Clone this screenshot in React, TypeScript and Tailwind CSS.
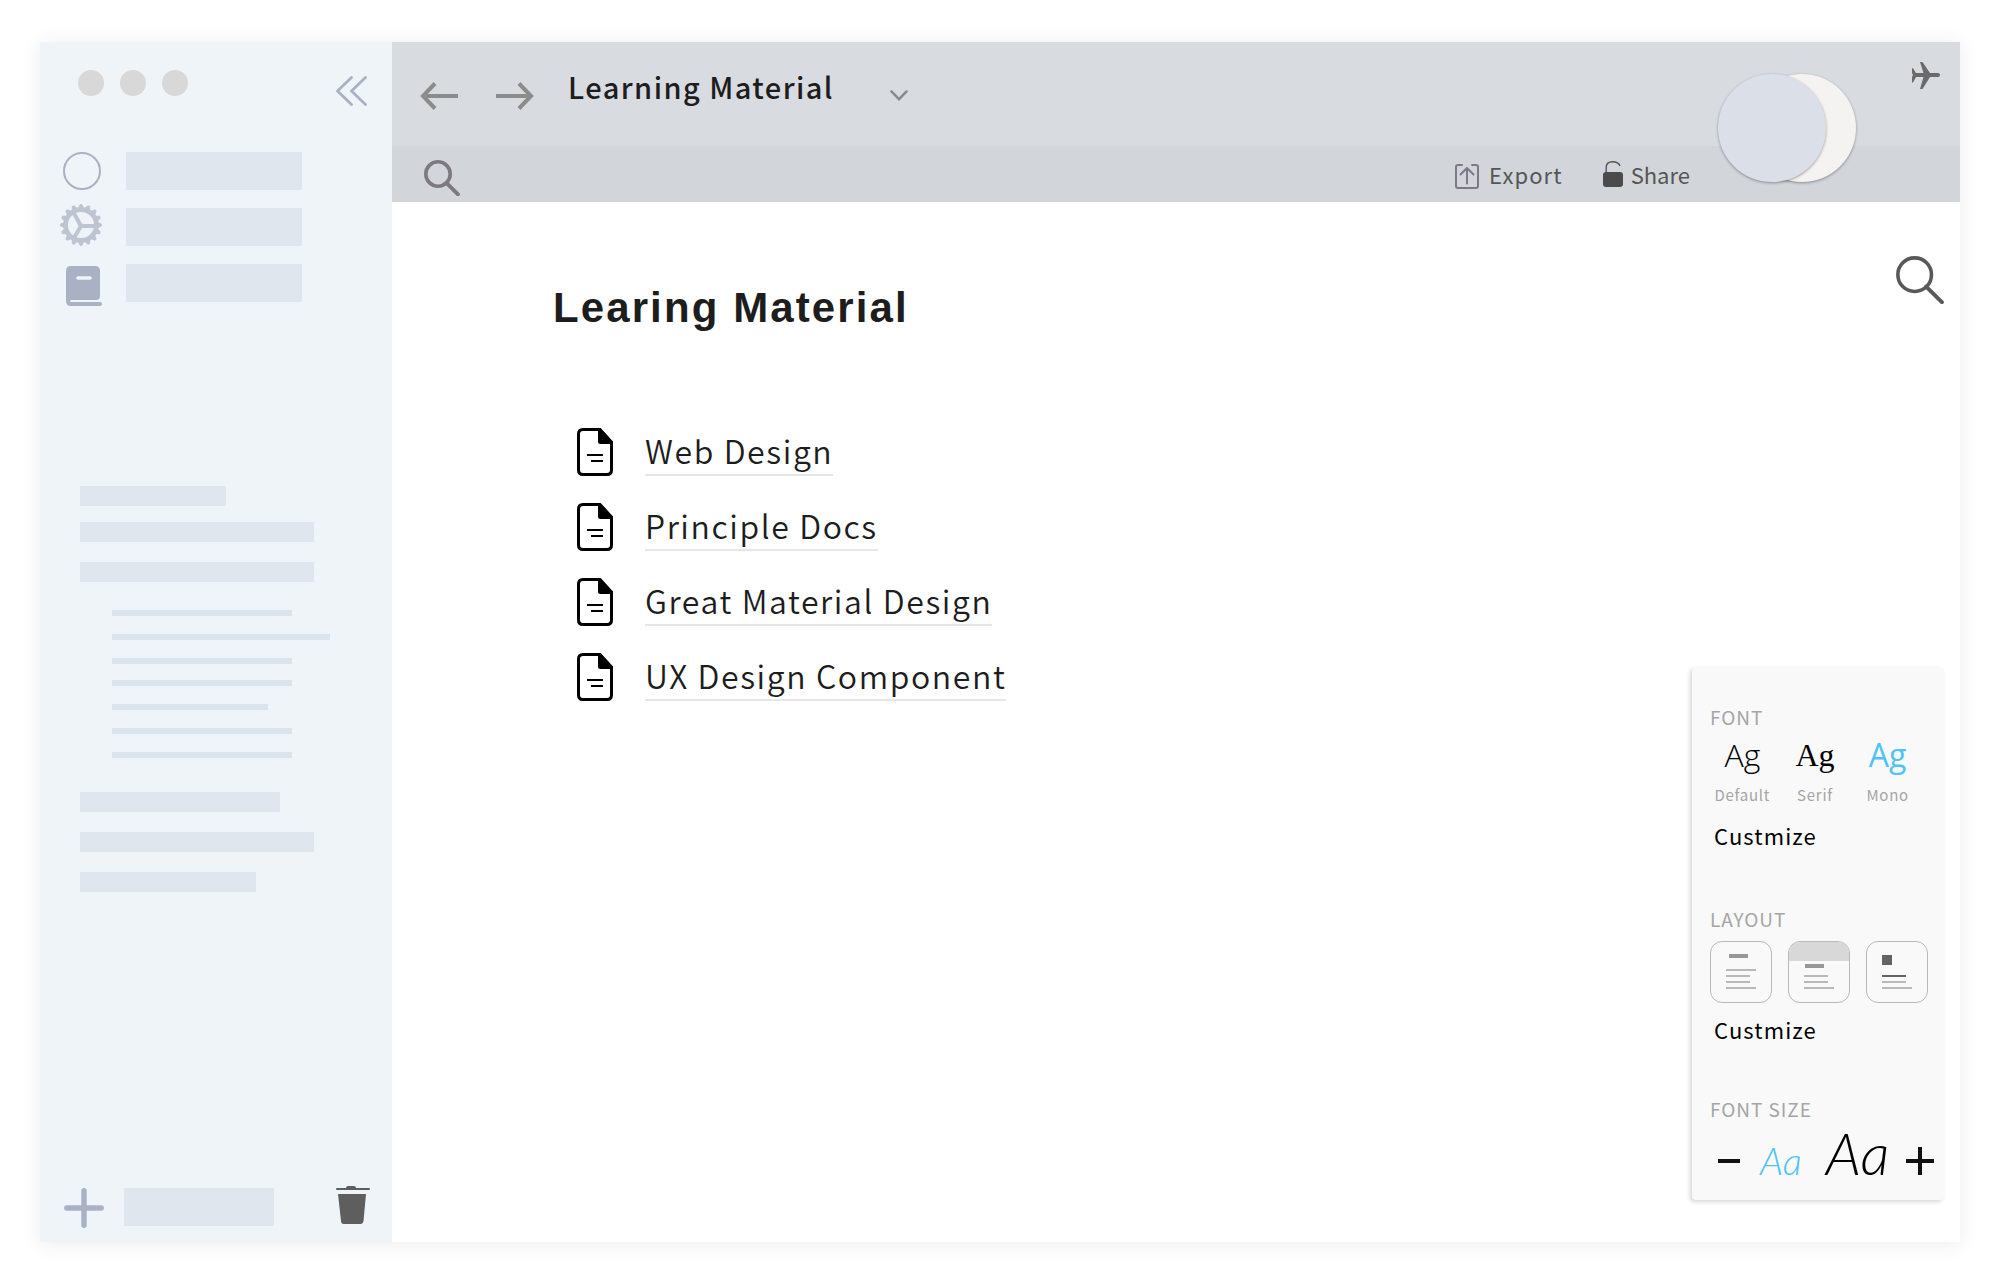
import type { ReactNode } from "react";

function Gear() {
  const teeth = Array.from({ length: 16 }, (_, i) => i * 22.5);
  return (
    <svg width="42" height="42" viewBox="-21 -21 42 42" fill="none" stroke="#bfc4d1" aria-hidden="true">
      <circle r="15.4" strokeWidth="4.6" />
      {teeth.map((a) => (
        <path key={a} d="M17 -2.4 L20.4 -0.9 V0.9 L17 2.4 Z" fill="#bfc4d1" strokeWidth="1" transform={`rotate(${a})`} />
      ))}
      <path d="M0 1 H15 M0 1 L-7.5 -12.5 M0 1 L-7 13" strokeWidth="4" />
      <circle cy="0.5" r="2" fill="#bfc4d1" />
    </svg>
  );
}

function Book() {
  return (
    <svg width="36" height="40" viewBox="0 0 36 40" aria-hidden="true">
      <path d="M5 0 H29 Q34 0 34 5 V30 Q34 34 30 34 H5.5 Q4 34 4 35 Q4 36 5.5 36 H34 Q36 36 36 38 Q36 40 34 40 H5 Q0 40 0 35 V5 Q0 0 5 0 Z" fill="#aab1c4" />
      <path d="M12 12 H24" stroke="#eef4f7" strokeWidth="3.6" strokeLinecap="round" />
    </svg>
  );
}

function Magnifier({ className, thin }: { className: string; thin?: boolean }) {
  return (
    <svg className={className} viewBox="0 0 36 36" fill="none" stroke="currentColor" aria-hidden="true">
      <circle cx="14" cy="14" r={thin ? 12.6 : 12.2} strokeWidth={thin ? 2.7 : 3.6} />
      <path d={thin ? "M22.6 23 L34.4 34.6" : "M22.4 22.8 L34 34.4"} strokeWidth={thin ? 3 : 3.8} strokeLinecap="round" />
    </svg>
  );
}

function DocIcon() {
  return (
    <svg width="36" height="48" viewBox="0 0 36 48" fill="none" aria-hidden="true">
      <path d="M6 1.5 H23 L34.5 14 V42 Q34.5 46.5 30 46.5 H6 Q1.5 46.5 1.5 42 V6 Q1.5 1.5 6 1.5 Z" stroke="#000" strokeWidth="3" />
      <path d="M21 1 H24 L36 14 V16 H23.5 Q21 16 21 13.5 Z" fill="#000" />
      <path d="M10 27 H26 M14 33 H26" stroke="#000" strokeWidth="2" />
    </svg>
  );
}

const bookmarks: { label: string; icon: ReactNode }[] = [
  {
    label: "Profile",
    icon: <span className="block size-[38px] rounded-full border-2 border-[#aab1c4]" />,
  },
  {
    label: "Settings",
    icon: (
      <span className="pr-0.5 pb-1">
        <Gear />
      </span>
    ),
  },
  {
    label: "Library",
    icon: (
      <span className="pt-1.5 pl-1">
        <Book />
      </span>
    ),
  },
];

function Block({ className }: { className: string }) {
  return <div className={`bg-[#e0e6ee] ${className}`} />;
}

function Sidebar() {
  return (
    <aside className="flex w-[352px] shrink-0 flex-col bg-[#eef4f7]">
      <div className="flex items-start justify-between pt-7 pr-6 pl-[38px]">
        <div className="flex gap-4">
          <span className="size-[26px] rounded-full bg-[#d8d8d8]" />
          <span className="size-[26px] rounded-full bg-[#d8d8d8]" />
          <span className="size-[26px] rounded-full bg-[#d8d8d8]" />
        </div>
        <button type="button" aria-label="Collapse sidebar" className="mt-1.5">
          <svg width="32" height="30" viewBox="0 0 32 30" fill="none" stroke="#aab1c4" strokeWidth="2.8" strokeLinecap="round" strokeLinejoin="round" aria-hidden="true">
            <path d="M15.5 1.5 L1.5 15 L15.5 28.5 M29.5 1.5 L15.5 15 L29.5 28.5" />
          </svg>
        </button>
      </div>

      <nav className="mt-[46px] flex flex-col gap-[18px]">
        {bookmarks.map((b) => (
          <button key={b.label} type="button" aria-label={b.label} className="flex h-[38px] items-center pl-5">
            <span className="flex w-[44px] justify-center">{b.icon}</span>
            <Block className="ml-[22px] h-[38px] w-[176px]" />
          </button>
        ))}
      </nav>

      <div className="mt-[184px] flex flex-col pl-10">
        <Block className="h-5 w-[146px]" />
        <Block className="mt-4 h-5 w-[234px]" />
        <Block className="mt-5 h-5 w-[234px]" />
        <div className="mt-7 flex flex-col gap-[18px] pl-8">
          <div className="h-1.5 w-[180px] bg-[#dbe4eb]" />
          <div className="h-1.5 w-[218px] bg-[#dbe4eb]" />
          <div className="h-1.5 w-[180px] bg-[#dbe4eb]" />
        </div>
        <div className="mt-4 flex flex-col gap-[18px] pl-8">
          <div className="h-1.5 w-[180px] bg-[#dbe4eb]" />
          <div className="h-1.5 w-[156px] bg-[#dbe4eb]" />
          <div className="h-1.5 w-[180px] bg-[#dbe4eb]" />
          <div className="h-1.5 w-[180px] bg-[#dbe4eb]" />
        </div>
        <Block className="mt-[34px] h-5 w-[200px]" />
        <Block className="mt-5 h-5 w-[234px]" />
        <Block className="mt-5 h-5 w-[176px]" />
      </div>

      <div className="mt-auto flex items-end pr-[22px] pb-3.5 pl-6">
        <button type="button" aria-label="New page" className="flex items-start gap-5">
          <svg width="40" height="40" viewBox="0 0 40 40" stroke="#aab1c4" strokeWidth="5.4" strokeLinecap="round" aria-hidden="true">
            <path d="M20 2.8 V37.2 M2.8 20 H37.2" />
          </svg>
          <Block className="h-[38px] w-[150px]" />
        </button>
        <button type="button" aria-label="Trash" className="ml-auto pb-1">
          <svg width="34" height="38" viewBox="0 0 34 38" fill="#5e5e5e" aria-hidden="true">
            <path d="M1 2 H10 Q10 0 12 0 H18 Q20 0 20 2 H33 Q34 2 34 3 Q34 4 33 4 H1 Q0 4 0 3 Q0 2 1 2 Z" />
            <path d="M2 8 H30 L27.5 35 Q27 38 24.5 38 H8 Q5 38 5 35 Z" />
          </svg>
        </button>
      </div>
    </aside>
  );
}

function Header() {
  return (
    <header className="relative">
      <div className="flex h-[104px] items-start bg-[#d8dbe0] pt-5 pr-5 pl-7">
        <button type="button" aria-label="Back" className="mt-5">
          <svg width="38" height="28" viewBox="0 0 38 28" fill="none" stroke="#8c8c8c" strokeWidth="4" aria-hidden="true">
            <path d="M38 14 H3 M15 1.5 L3 14 L15 26.5" />
          </svg>
        </button>
        <button type="button" aria-label="Forward" className="mt-5 ml-[38px]">
          <svg width="38" height="28" viewBox="0 0 38 28" fill="none" stroke="#8c8c8c" strokeWidth="4" aria-hidden="true">
            <path d="M0 14 H35 M23 1.5 L35 14 L23 26.5" />
          </svg>
        </button>
        <button type="button" className="mt-1 ml-[34px] flex items-start gap-14 text-left text-[29px] leading-10 font-medium tracking-wider text-[#1d1d1d]">
          <span>Learning Material</span>
          <svg className="mt-6" width="18" height="11" viewBox="0 0 18 11" fill="none" stroke="#8a8794" strokeWidth="2.4" strokeLinecap="round" aria-hidden="true">
            <path d="M1.4 1.4 L9 9.2 L16.6 1.4" />
          </svg>
        </button>
        <button type="button" aria-label="Send" className="ml-auto">
          <svg width="28" height="27" viewBox="0 0 28 27" fill="#6a6a6a" aria-hidden="true">
            <path d="M0 6.3 H1 L4 11 H11.5 L8 0 H10.5 L18 11 H26 Q28 11 28 13 Q28 15 26 15 H18 L10.5 27 H8 L11.5 15 H4 L1 20.5 H0 V15 L1 13 L0 11 Z" />
          </svg>
        </button>
      </div>
      <div className="flex h-14 items-center bg-[#d2d5da] pr-[270px] pl-8 text-[22px] leading-8 text-[#555]">
        <button type="button" aria-label="Search" className="mt-2 text-[#7d7982]">
          <Magnifier className="size-9" />
        </button>
        <button type="button" className="ml-auto flex items-center gap-2.5 tracking-wider">
          <svg className="mt-1" width="24" height="25" viewBox="0 0 24 25" fill="none" stroke="#7f7889" strokeWidth="2" strokeLinecap="round" strokeLinejoin="round" aria-hidden="true">
            <path d="M7 1 H3 Q1 1 1 3 V22 Q1 24 3 24 H21 Q23 24 23 22 V3 Q23 1 21 1 H17 M12 19.5 V4.5 M5.5 10.5 L12 4 L18.5 10.5" />
          </svg>
          Export
        </button>
        <button type="button" className="ml-10 flex items-center gap-2">
          <svg width="20" height="26" viewBox="0 0 20 26" aria-hidden="true">
            <path d="M3.2 12 V6.5 Q3.4 0.8 9.5 0.8 Q15.5 0.8 17 5" fill="none" stroke="#555" strokeWidth="1.4" />
            <rect y="11" width="20" height="15" rx="3" fill="#4b4b4b" />
          </svg>
          Share
        </button>
      </div>
      <div className="absolute top-8 right-[104px] flex">
        <span className="z-10 size-[108px] rounded-full bg-[#dbdfe8] shadow-[0_1px_3px_rgba(0,0,0,0.35)]" />
        <span className="-ml-[78px] size-[108px] rounded-full bg-[#f4f3f1] shadow-[0_1px_3px_rgba(0,0,0,0.35)]" />
      </div>
    </header>
  );
}

const pages = ["Web Design", "Principle Docs", "Great Material Design", "UX Design Component"];

function Document() {
  return (
    <article className="flex-1 pt-[82px] pl-[161px]">
      <h1 className="font-['Liberation_Sans',Arial,sans-serif] text-[42px] leading-[48px] font-bold tracking-wider text-[#1d1d1d]">
        Learing Material
      </h1>
      <ul className="mt-24 flex flex-col gap-[27px] pl-6">
        {pages.map((p) => (
          <li key={p} className="flex items-start gap-8">
            <DocIcon />
            <a href="#" className="border-b-2 border-[#e6e6e6] pb-0.5 text-[32px] leading-[44px] font-[350] tracking-wider text-[#1d1d1d]">
              {p}
            </a>
          </li>
        ))}
      </ul>
    </article>
  );
}

function GroupTitle({ children }: { children: ReactNode }) {
  return <h2 className="pl-1 text-[19px] leading-6 tracking-wider text-[#a5a5a5]">{children}</h2>;
}

function Customize({ className }: { className: string }) {
  return (
    <button type="button" className={`ml-2 block text-[22px] leading-8 tracking-wider text-black ${className}`}>
      Custmize
    </button>
  );
}

function LayoutOption({ label, children }: { label: string; children: ReactNode }) {
  return (
    <button type="button" aria-label={label} className="size-[62px] overflow-hidden rounded-xl border border-[#b9b9b9]">
      <svg width="60" height="60" viewBox="1 1 60 60" aria-hidden="true">
        {children}
      </svg>
    </button>
  );
}

function StylePanel() {
  return (
    <section aria-label="Page style" className="w-[252px] rounded bg-[#f9f9f9] pt-[38px] pr-4 pb-[19px] pl-3.5 shadow-[-2px_2px_4px_rgba(0,0,0,0.16)]">
      <GroupTitle>FONT</GroupTitle>
      <div className="mt-2 grid grid-cols-3 pr-1 text-center">
        <button type="button" className="text-[15px] leading-5 tracking-wider text-[#a5a5a5]">
          <span className="block font-['Open_Sans','Noto_Sans',sans-serif] text-[32px] leading-9 font-light tracking-normal text-black">Ag</span>
          <span className="mt-3 block">Default</span>
        </button>
        <button type="button" className="text-[15px] leading-5 tracking-wider text-[#a5a5a5]">
          <span className="block font-['Liberation_Serif',serif] text-[32px] leading-9 tracking-normal text-black">Ag</span>
          <span className="mt-3 block">Serif</span>
        </button>
        <button type="button" aria-pressed="true" className="text-[15px] leading-5 tracking-wider text-[#a5a5a5]">
          <span className="block font-['Open_Sans','Noto_Sans',sans-serif] text-[32px] leading-9 tracking-normal text-[#4fc3f7]">Ag</span>
          <span className="mt-3 block">Mono</span>
        </button>
      </div>
      <Customize className="mt-3.5" />

      <div className="mt-14">
        <GroupTitle>LAYOUT</GroupTitle>
      </div>
      <div className="mt-2.5 flex gap-4 pl-1">
        <LayoutOption label="Plain layout">
          <path d="M19 15 H38" stroke="#979797" strokeWidth="4" />
          <path d="M16 29 H46 M16 35 H40 M16 41 H40 M16 47 H46" stroke="#b9b9b9" strokeWidth="2" />
        </LayoutOption>
        <LayoutOption label="Cover layout">
          <path d="M0 0 H62 V20 H0 Z" fill="#d8d8d8" />
          <path d="M17 25 H36" stroke="#979797" strokeWidth="4" />
          <path d="M16 35 H40 M16 41 H40 M16 47 H46" stroke="#b9b9b9" strokeWidth="2" />
        </LayoutOption>
        <LayoutOption label="Icon layout">
          <path d="M16 14 H26 V24 H16 Z" fill="#636363" />
          <path d="M16 35 H40" stroke="#636363" strokeWidth="2" />
          <path d="M16 41 H40 M16 47 H46" stroke="#b9b9b9" strokeWidth="2" />
        </LayoutOption>
      </div>
      <Customize className="mt-2.5" />

      <div className="mt-[52px]">
        <GroupTitle>FONT SIZE</GroupTitle>
      </div>
      <div className="-mr-1.5 mt-1 flex h-14 items-baseline pl-3 font-['Lato',sans-serif] leading-[56px] italic">
        <button type="button" aria-label="Decrease font size">
          <svg className="inline-block align-baseline" width="22" height="28" viewBox="0 0 22 28" aria-hidden="true">
            <path d="M0 14 H22" stroke="#111" strokeWidth="4" />
          </svg>
        </button>
        <button type="button" aria-pressed="true" className="ml-5 text-[38px] font-light text-[#4fc3f7]">Aa</button>
        <button type="button" className="ml-6 text-[58px] font-light text-black">Aa</button>
        <button type="button" aria-label="Increase font size" className="ml-auto">
          <svg className="inline-block align-baseline" width="28" height="28" viewBox="0 0 28 28" aria-hidden="true">
            <path d="M0 14 H28 M14 0 V28" stroke="#111" strokeWidth="4" />
          </svg>
        </button>
      </div>
    </section>
  );
}

export default function App() {
  return (
    <div className="flex min-h-screen bg-white px-10 pt-[42px] pb-[38px] font-['Noto_Sans_CJK_SC','Noto_Sans',sans-serif]">
      <div className="flex flex-1 bg-white shadow-[0_2px_20px_rgba(0,0,0,0.08)]">
        <Sidebar />
        <div className="flex min-w-0 flex-1 flex-col">
          <Header />
          <main className="flex flex-1">
            <Document />
            <div className="flex flex-col items-end justify-between gap-8 pt-[54px] pr-4 pb-[42px]">
              <button type="button" aria-label="Find in page" className="text-[#595959]">
                <Magnifier className="size-12" thin />
              </button>
              <StylePanel />
            </div>
          </main>
        </div>
      </div>
    </div>
  );
}
